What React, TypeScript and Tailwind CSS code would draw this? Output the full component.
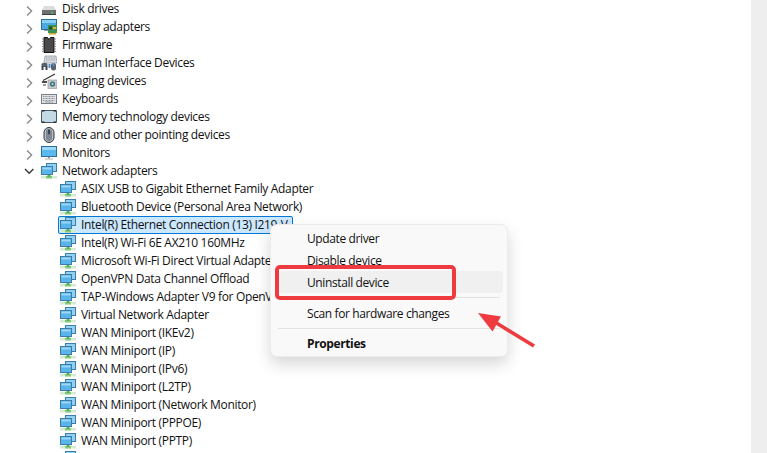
import React from "react";

const NetIcon = () => (
  <svg width="16" height="16" viewBox="0 0 16 16" className="shrink-0">
    <rect x="0" y="13" width="16" height="2.5" fill="#d4ead2" />
    <rect x="5" y="13" width="6" height="2.5" fill="#86cc80" />
    <rect x="6.5" y="10.5" width="3" height="3.5" fill="#55b54f" />
    <rect x="5.5" y="0.5" width="10" height="8" fill="#8fd0f4" stroke="#3a7da8" />
    <rect x="0.5" y="3.5" width="11" height="8" fill="#58b4ea" stroke="#3a7da8" />
    <rect x="1.5" y="4.5" width="9" height="2" fill="#9bd6f6" />
  </svg>
);

const DiskIcon = () => (
  <svg width="16" height="16" viewBox="0 0 16 16" className="shrink-0">
    <path d="M3 5h10l2 4H1z" fill="#dcdcdc" />
    <rect x="1" y="9" width="14" height="5" fill="#6f6f6f" />
    <rect x="1" y="13" width="14" height="1" fill="#3f3f3f" />
    <rect x="10" y="11" width="2" height="1.5" fill="#3fd04a" />
  </svg>
);

const DisplayIcon = () => (
  <svg width="16" height="16" viewBox="0 0 16 16" className="shrink-0">
    <rect x="0.5" y="0.5" width="15" height="10" fill="#4aa9e4" stroke="#2c6f9c" />
    <rect x="1" y="1" width="14" height="3" fill="#8ad0f4" />
    <rect x="3" y="11" width="6" height="1" fill="#9a9a9a" />
    <rect x="7" y="6" width="9" height="8" fill="#3f8f52" />
    <rect x="8" y="7.5" width="3" height="3" fill="#1f4f2c" />
    <rect x="12" y="8" width="3" height="2" fill="#e0b040" />
    <rect x="8" y="14" width="7" height="1.5" fill="#d4a72c" />
  </svg>
);

const FirmwareIcon = () => (
  <svg width="16" height="16" viewBox="0 0 16 16" className="shrink-0">
    <path d="M3 0.5h3.5a1.5 1.5 0 0 0 3 0H13v15H3z" fill="#4a4a4a" stroke="#111" />
    <path d="M1 2h2M1 4.5h2M1 7h2M1 9.5h2M1 12h2M1 14.5h2M13 2h2M13 4.5h2M13 7h2M13 9.5h2M13 12h2M13 14.5h2" stroke="#8a8a8a" />
  </svg>
);

const HidIcon = () => (
  <svg width="16" height="16" viewBox="0 0 16 16" className="shrink-0">
    <path d="M4 1h11l1 7H3z" fill="#d8dde2" stroke="#8a8f96" strokeWidth="0.7" />
    <path d="M5 3h9M5 5h9" stroke="#9aa2aa" strokeDasharray="1 0.6" />
    <rect x="0.5" y="8" width="6" height="4" rx="1.5" fill="#59626c" />
    <rect x="0.5" y="11" width="2" height="4" fill="#3f4852" />
    <rect x="4.5" y="11" width="2" height="4" fill="#3f4852" />
    <rect x="10" y="8" width="5" height="7.5" rx="2.5" fill="#5a6068" />
    <rect x="12" y="8" width="1.2" height="3" fill="#4aa9e4" />
    <rect x="7.5" y="9" width="2" height="4" fill="#4a86c0" />
  </svg>
);

const ImagingIcon = () => (
  <svg width="16" height="16" viewBox="0 0 16 16" className="shrink-0">
    <path d="M2 7.5L14 1" stroke="#3a3a3a" strokeWidth="1.4" />
    <rect x="1" y="8" width="5" height="2" fill="#4a4a4a" />
    <rect x="2" y="11" width="3" height="2" fill="#9a9a9a" />
    <rect x="7" y="7" width="9" height="8.5" fill="#c4c8cc" stroke="#8a8f96" strokeWidth="0.6" />
    <circle cx="11.5" cy="11" r="2.6" fill="#3e6f78" />
    <circle cx="11.5" cy="11" r="1.1" fill="#bfe6ee" />
  </svg>
);

const KeyboardIcon = () => (
  <svg width="16" height="16" viewBox="0 0 16 16" className="shrink-0">
    <rect x="0.5" y="3.5" width="15" height="9" fill="#dfe2e5" stroke="#7a7f86" />
    <path d="M2 5.5h12M2 7.5h12M2 9.5h12" stroke="#8f959c" strokeDasharray="1 0.5" />
    <rect x="4" y="10.5" width="8" height="1" fill="#9aa0a6" />
  </svg>
);

const MemoryIcon = () => (
  <svg width="16" height="16" viewBox="0 0 16 16" className="shrink-0">
    <rect x="0.5" y="1.5" width="15" height="12" rx="1.5" fill="#c3d9e6" stroke="#4a5660" />
    <rect x="0.5" y="1" width="3" height="1.5" fill="#26303a" />
    <rect x="12.5" y="1" width="3" height="1.5" fill="#26303a" />
    <rect x="0.5" y="12.5" width="3" height="1.5" fill="#26303a" />
    <rect x="12.5" y="12.5" width="3" height="1.5" fill="#26303a" />
  </svg>
);

const MouseIcon = () => (
  <svg width="16" height="16" viewBox="0 0 16 16" className="shrink-0">
    <rect x="3" y="0.5" width="10" height="15" rx="5" fill="#b6bcc4" stroke="#2e343a" />
    <rect x="5" y="2" width="6" height="12" rx="3" fill="#7f8792" />
    <rect x="7.2" y="2.5" width="1.6" height="5" rx="0.8" fill="#2e343a" />
  </svg>
);

const MonitorIcon = () => (
  <svg width="16" height="16" viewBox="0 0 16 16" className="shrink-0">
    <rect x="0.5" y="1.5" width="15" height="10" fill="#5cb9ee" stroke="#2c6f9c" />
    <rect x="1" y="2" width="14" height="3" fill="#9bd8f7" />
    <rect x="7" y="12" width="2" height="1.5" fill="#9a9a9a" />
    <rect x="4" y="13.5" width="8" height="1" fill="#b4b4b4" />
  </svg>
);

const Chevron = ({ open }: { open?: boolean }) =>
  open ? (
    <svg width="10" height="10" viewBox="0 0 10 10">
      <path d="M1 3l4.2 4.2L9.4 3" fill="none" stroke="#3a3a3a" strokeWidth="1.4" />
    </svg>
  ) : (
    <svg width="10" height="12" viewBox="0 0 10 12" className="mt-[3px]">
      <path d="M3 1.5l4.6 4.5L3 10.5" fill="none" stroke="#8c8c8c" strokeWidth="1.4" />
    </svg>
  );

const categories: [string, React.FC][] = [
  ["Disk drives", DiskIcon],
  ["Display adapters", DisplayIcon],
  ["Firmware", FirmwareIcon],
  ["Human Interface Devices", HidIcon],
  ["Imaging devices", ImagingIcon],
  ["Keyboards", KeyboardIcon],
  ["Memory technology devices", MemoryIcon],
  ["Mice and other pointing devices", MouseIcon],
  ["Monitors", MonitorIcon],
];

const adapters = [
  "ASIX USB to Gigabit Ethernet Family Adapter",
  "Bluetooth Device (Personal Area Network)",
  "Intel(R) Ethernet Connection (13) I219-V",
  "Intel(R) Wi-Fi 6E AX210 160MHz",
  "Microsoft Wi-Fi Direct Virtual Adapter",
  "OpenVPN Data Channel Offload",
  "TAP-Windows Adapter V9 for OpenVPN Connect",
  "Virtual Network Adapter",
  "WAN Miniport (IKEv2)",
  "WAN Miniport (IP)",
  "WAN Miniport (IPv6)",
  "WAN Miniport (L2TP)",
  "WAN Miniport (Network Monitor)",
  "WAN Miniport (PPPOE)",
  "WAN Miniport (PPTP)",
];

const Category = ({ label, Icon, open }: { label: string; Icon: React.FC; open?: boolean }) => (
  <div className="flex h-[18px] items-center">
    <div className="flex w-[41px] justify-start pl-[24px]">
      <Chevron open={open} />
    </div>
    <Icon />
    <span className="ml-[5px] whitespace-nowrap">{label}</span>
  </div>
);

export default function App() {
  return (
    <div
      className="relative flex h-[453px] w-[767px] overflow-hidden bg-white text-[12px] leading-[18px] text-[#111111]"
      style={{ fontFamily: '"Open Sans", sans-serif' }}
    >
      <div className="min-w-0 flex-1 overflow-hidden tracking-[-0.33px]">
        {categories.map(([label, Icon]) => (
          <Category key={label} label={label} Icon={Icon} />
        ))}
        <Category label="Network adapters" Icon={NetIcon} open />
        {adapters.map((a, i) =>
          i === 2 ? (
            <div
              key={a}
              className="ml-[58px] flex h-[18px] w-[235px] items-center rounded-[2px] border border-[#0078d7] bg-[#cce8ff] pl-px"
            >
              <NetIcon />
              <span className="ml-[5px] whitespace-nowrap">{a}</span>
            </div>
          ) : (
            <div key={a} className="flex h-[18px] items-center pl-[60px]">
              <NetIcon />
              <span className="ml-[5px] whitespace-nowrap">{a}</span>
            </div>
          )
        )}
        <div className="flex h-[18px] items-center pl-[60px]">
          <NetIcon />
        </div>
      </div>
      <div className="w-[16px] shrink-0 bg-[#eeeeee]" />

      <div className="absolute left-[270px] top-[224px] flex h-[133px] w-[238px] flex-col rounded-[7px] border border-[#ececec] bg-[#f9f9f9] px-[7px] pt-[2px] shadow-[0_7px_16px_rgba(0,0,0,0.16)] tracking-[-0.38px]">
        <div className="flex h-[22px] shrink-0 items-center pl-[29px] pt-[2px]">Update driver</div>
        <div className="flex h-[22px] shrink-0 items-center pl-[29px] pt-[2px]">Disable device</div>
        <div className="mr-[-3px] flex h-[22px] shrink-0 items-center rounded-[4px] bg-[#f0f0f0] pl-[29px] pt-[2px]">Uninstall device</div>
        <div className="mt-[4px] h-px shrink-0 bg-[#e2e2e2]" />
        <div className="flex h-[30px] shrink-0 items-center pl-[29px] pt-[2px]">Scan for hardware changes</div>
        <div className="h-px shrink-0 bg-[#e2e2e2]" />
        <div className="flex h-[27px] shrink-0 items-center pl-[29px] pt-[2px] font-bold">Properties</div>
      </div>

      <div className="absolute left-[275px] top-[265px] h-[35px] w-[181px] rounded-[5px] border-4 border-[#ee3b3f]" />

      <svg className="absolute left-[470px] top-[305px]" width="70" height="48" viewBox="470 305 70 48">
        <path d="M534 346L490 319" stroke="#ee3b3f" strokeWidth="3.6" fill="none" />
        <path d="M478 313L501 316.5L492.5 331.5z" fill="#ee3b3f" />
      </svg>
    </div>
  );
}
